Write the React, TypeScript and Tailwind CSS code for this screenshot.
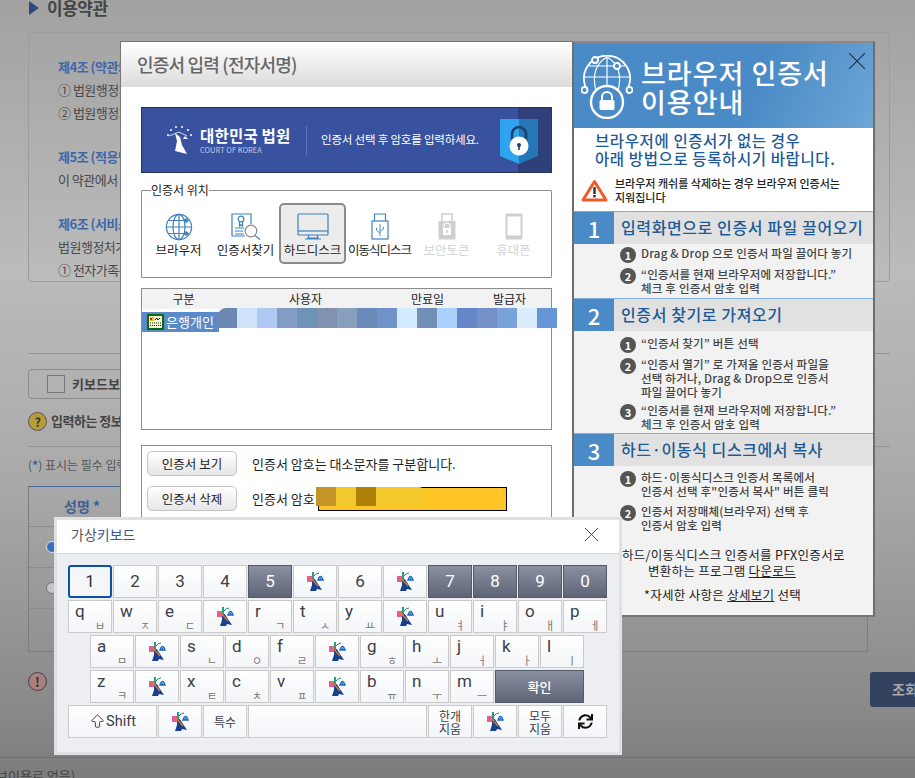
import { ArrowBigUp } from "lucide-react";
import { FaSync } from "react-icons/fa";

/* ================= DATA ================= */

type KeyDef = {
  label?: string;
  sub?: string;
  logo?: boolean;
  dark?: boolean;
  focus?: boolean;
};

const L: KeyDef = { logo: true };

const row1: KeyDef[] = [
  { label: "1", focus: true },
  { label: "2" },
  { label: "3" },
  { label: "4" },
  { label: "5", dark: true },
  L,
  { label: "6" },
  L,
  { label: "7", dark: true },
  { label: "8", dark: true },
  { label: "9", dark: true },
  { label: "0", dark: true },
];

const row2: KeyDef[] = [
  { label: "q", sub: "ㅂ" },
  { label: "w", sub: "ㅈ" },
  { label: "e", sub: "ㄷ" },
  L,
  { label: "r", sub: "ㄱ" },
  { label: "t", sub: "ㅅ" },
  { label: "y", sub: "ㅛ" },
  L,
  { label: "u", sub: "ㅕ" },
  { label: "i", sub: "ㅑ" },
  { label: "o", sub: "ㅐ" },
  { label: "p", sub: "ㅔ" },
];

const row3: KeyDef[] = [
  { label: "a", sub: "ㅁ" },
  L,
  { label: "s", sub: "ㄴ" },
  { label: "d", sub: "ㅇ" },
  { label: "f", sub: "ㄹ" },
  L,
  { label: "g", sub: "ㅎ" },
  { label: "h", sub: "ㅗ" },
  { label: "j", sub: "ㅓ" },
  { label: "k", sub: "ㅏ" },
  { label: "l", sub: "ㅣ" },
];

const row4: KeyDef[] = [
  { label: "z", sub: "ㅋ" },
  L,
  { label: "x", sub: "ㅌ" },
  { label: "c", sub: "ㅊ" },
  { label: "v", sub: "ㅍ" },
  L,
  { label: "b", sub: "ㅠ" },
  { label: "n", sub: "ㅜ" },
  { label: "m", sub: "ㅡ" },
];

const maskColors = [
  "#cfe3fb",
  "#b0c9f2",
  "#829cc4",
  "#6f93b6",
  "#7f92b0",
  "#87a0be",
  "#6a8ab8",
  "#6f93c8",
  "#d3eaff",
  "#7090b8",
  "#abd0fc",
  "#6586c8",
  "#7592c8",
  "#7aa2da",
  "#dcecff",
  "#6496d8",
];

/* ================= ICONS ================= */

function CourtMark() {
  return (
    <svg width="17" height="20" viewBox="0 0 17 20" className="shrink-0">
      <path d="M5 7 Q8 6 9 9 L11 12 L15 18 L10 17 L9 19 L3 19 L5 13 Z" fill="#16418f" />
      <rect x="0" y="4" width="5" height="6" fill="#e8589c" />
      <path d="M6 0 V9" stroke="#12907c" strokeWidth="1.8" />
      <path d="M7 4 Q9 1 12 1" fill="none" stroke="#12907c" strokeWidth="1" />
      <path d="M3 5 L11 14" stroke="#ee7a22" strokeWidth="1.2" />
      <path d="M11 8 Q13.5 1 16 8 Z" fill="none" stroke="#1f66b8" strokeWidth="1.4" />
      <circle cx="13.5" cy="7" r="1" fill="#1f66b8" />
    </svg>
  );
}

function GlobeIcon() {
  return (
    <svg width="28" height="28" viewBox="0 0 28 28" fill="none" stroke="#3f80bd" strokeWidth="1.2">
      <circle cx="14" cy="14" r="12.6" />
      <ellipse cx="14" cy="14" rx="6" ry="12.6" />
      <path d="M14 1.4 V26.6 M1.4 14 H26.6 M3.4 7.5 H24.6 M3.4 20.5 H24.6" />
      <circle cx="21" cy="7.5" r="1.6" fill="#3f80bd" />
      <circle cx="21" cy="20.5" r="1.6" fill="#3f80bd" />
    </svg>
  );
}

function CertSearchIcon() {
  return (
    <svg width="30" height="27" viewBox="0 0 30 27" fill="none" stroke="#3f80bd" strokeWidth="1.2">
      <path d="M20 11 V1 H1 V23 H14" />
      <circle cx="10" cy="6" r="2.8" />
      <path d="M8.5 8.5 V13 L10 11.8 L11.5 13 V8.5" />
      <path d="M4 15 H13 M4 18 H12 M4 21 H13" />
      <circle cx="20" cy="18" r="5.8" stroke="#888" />
      <path d="M24 22.5 L29 26.5" />
    </svg>
  );
}

function MonitorIcon() {
  return (
    <svg width="32" height="27" viewBox="0 0 32 27" fill="none" stroke="#3f80bd" strokeWidth="1.2">
      <rect x="1" y="1" width="30" height="21" rx="1" />
      <path d="M1 18 H31" />
      <path d="M12 22 L11 25 H21 L20 22 M8 26 H24" />
    </svg>
  );
}

function UsbIcon() {
  return (
    <svg width="18" height="27" viewBox="0 0 18 27" fill="none" stroke="#3f80bd" strokeWidth="1.2">
      <path d="M3.5 8 V1 H14.5 V8" />
      <rect x="1" y="8" width="16" height="18" />
      <path d="M9 11 V23 M9 20 L5.5 17.5 V15 M9 18 L12.5 16 V14" strokeWidth="0.9" />
    </svg>
  );
}

function TokenIcon() {
  return (
    <svg width="18" height="27" viewBox="0 0 18 27">
      <path d="M4 8 V1 H14 V8" fill="none" stroke="#cfcfcf" strokeWidth="1.5" />
      <rect x="0.5" y="8" width="17" height="18.5" fill="#cfcfcf" />
      <path d="M6 15 V13 a3 3 0 0 1 6 0 V15" fill="none" stroke="#fff" strokeWidth="1.2" />
      <rect x="5" y="15" width="8" height="7" fill="#fff" />
      <rect x="8.4" y="17" width="1.2" height="3" fill="#bbb" />
    </svg>
  );
}

function PhoneIcon() {
  return (
    <svg width="18" height="27" viewBox="0 0 18 27">
      <rect x="0.5" y="0.5" width="17" height="26" rx="1.5" fill="#cfcfcf" />
      <rect x="2.5" y="3.5" width="13" height="19" fill="#fff" />
    </svg>
  );
}

function CertRowIcon() {
  return (
    <svg width="17" height="16" viewBox="0 0 17 16" className="shrink-0">
      <rect x="0" y="0" width="17" height="16" fill="#0a6a10" />
      <rect x="2" y="2" width="13" height="12" fill="#fbf7d0" />
      <rect x="3" y="3" width="4" height="4" fill="#e8c800" />
      <rect x="3" y="4" width="2" height="2" fill="#d8201a" />
      <path d="M8 6 L10 4 L11 6 L13 4" stroke="#222" strokeWidth="1" fill="none" />
      <path d="M3 9 H14 M3 11.5 H14" stroke="#222" strokeWidth="1" strokeDasharray="1 1" />
    </svg>
  );
}

function GlobeLockIcon() {
  return (
    <svg width="52" height="64" viewBox="0 0 52 64" fill="none" stroke="#fff" strokeWidth="1.8">
      <path d="M5 33 A23 23 0 1 1 47 33" />
      <path d="M26 2 V36 M3 22 H49 M8 11 H44" strokeWidth="1.2" />
      <path d="M26 2 C12 10 12 24 15 36 M26 2 C40 10 40 24 37 36" strokeWidth="1.2" />
      <circle cx="14" cy="5" r="3" fill="#4a8ac6" />
      <circle cx="36" cy="11" r="3" fill="#4a8ac6" />
      <circle cx="3.5" cy="35" r="3" fill="#4a8ac6" />
      <circle cx="48.5" cy="35" r="3" fill="#4a8ac6" />
      <circle cx="26" cy="47" r="16" fill="#4a8ac6" strokeWidth="2.4" />
      <path d="M21 45 V42 a5 5 0 0 1 10 0 V45" strokeWidth="2" />
      <rect x="18.5" y="45" width="15" height="10" rx="1.5" fill="#fff" stroke="none" />
    </svg>
  );
}

function WarningIcon() {
  return (
    <svg width="27" height="23" viewBox="0 0 27 23">
      <path
        d="M13.5 2.5 L25 21 H2 Z"
        fill="#fff"
        stroke="#ef5a2c"
        strokeWidth="3"
        strokeLinejoin="round"
      />
      <rect x="12.3" y="8" width="2.4" height="7" fill="#333" />
      <rect x="12.3" y="16" width="2.4" height="2.4" fill="#333" />
    </svg>
  );
}

function ShieldIcon() {
  return (
    <svg width="40" height="46" viewBox="0 0 40 46">
      <path d="M1 1 H20 V46 L1 38 Z" fill="#2fa4ee" />
      <path d="M20 1 H39 V38 L20 46 Z" fill="#2478b8" />
      <path d="M13 23 V16 a7 7 0 0 1 14 0 V23" fill="none" stroke="#1c3f6e" strokeWidth="2.6" />
      <circle cx="20" cy="28" r="9.5" fill="#fff" />
      <circle cx="20" cy="27" r="2" fill="#1c3f6e" />
      <rect x="19.2" y="27" width="1.6" height="5" fill="#1c3f6e" />
    </svg>
  );
}

function CourtLogoWhite() {
  return (
    <svg width="28" height="30" viewBox="0 0 28 30" fill="#fff">
      <circle cx="3" cy="10" r="1" />
      <circle cx="6" cy="5" r="1" />
      <circle cx="11" cy="2" r="1" />
      <circle cx="17" cy="2" r="1" />
      <circle cx="23" cy="5" r="1" />
      <circle cx="26" cy="10" r="1" />
      <path d="M10 8 L15 12 L17 20 L22 29 L10 26 L12 16 Z" />
      <path d="M4 11 L14 7 M14 7 L22 11" stroke="#fff" strokeWidth="0.8" />
      <path d="M18 14 L20 11 L23 14 Z" />
    </svg>
  );
}

function Close({ size, color }: { size: number; color: string }) {
  return (
    <svg width={size} height={size} viewBox="0 0 16 16" stroke={color} strokeWidth="0.9">
      <path d="M1 1 L15 15 M15 1 L1 15" />
    </svg>
  );
}

/* ================= SMALL PARTS ================= */

function Bullet({ n }: { n: number }) {
  return (
    <span className="w-[16px] h-[16px] mt-px rounded-full bg-[#555] text-white text-[11px] font-bold leading-[16px] text-center shrink-0">
      {n}
    </span>
  );
}

function Item({ n, lines }: { n: number; lines: string[] }) {
  return (
    <div className="flex gap-[5px] text-[11.5px] leading-[14px] font-medium text-[#444] tracking-[0.2px]">
      <Bullet n={n} />
      <div>
        {lines.map((line) => (
          <p key={line} className="whitespace-nowrap">
            {line}
          </p>
        ))}
      </div>
    </div>
  );
}

function GuideHead({ n, title }: { n: number; title: string }) {
  return (
    <div className="flex h-[33px] border-t border-[#7fb0dc]">
      <div className="w-[40px] bg-[#4a8ac6] text-white text-[22px] font-medium flex items-center justify-center">
        {n}
      </div>
      <div className="flex-1 bg-[#e1e1e1] pl-[7px] pb-[3px] flex items-center text-[16px] font-medium text-[#1d5a96] tracking-[0.6px] whitespace-nowrap">
        {title}
      </div>
    </div>
  );
}

function Key({ k }: { k: KeyDef }) {
  if (k.dark) {
    return (
      <div className="w-[44px] h-[33px] border border-[#555a68] bg-gradient-to-b from-[#8a90a1] to-[#5f6476] text-white text-[17px] flex items-center justify-center">
        {k.label}
      </div>
    );
  }

  if (k.focus) {
    return (
      <div className="w-[44px] h-[33px] border-2 border-[#0b4fb0] rounded-[3px] bg-[#f5f6f8] text-[#333] text-[17px] flex items-center justify-center">
        {k.label}
      </div>
    );
  }

  return (
    <div
      className={`relative w-[44px] h-[33px] border border-[#cacaca] bg-gradient-to-b from-white to-[#f3f5f8] text-[#3b3f47] flex ${
        k.sub ? "pl-[6px] text-[17px] leading-[20px]" : "items-center justify-center text-[17px]"
      }`}
    >
      {k.logo ? <CourtMark /> : k.label}
      {k.sub && (
        <span className="absolute right-[6px] bottom-[1px] text-[11px] leading-[11px] text-[#777] font-['Noto_Sans_CJK_KR']">
          {k.sub}
        </span>
      )}
    </div>
  );
}

function PlainKey({ children, wide }: { children: React.ReactNode; wide?: string }) {
  return (
    <div
      className={`${
        wide || "w-[44px]"
      } h-[33px] border border-[#cacaca] bg-gradient-to-b from-white to-[#f3f5f8] text-[#3b3f47] flex items-center justify-center text-center`}
    >
      {children}
    </div>
  );
}

function PlaceButton({
  icon,
  label,
  active,
  off,
  tight,
}: {
  icon: React.ReactNode;
  label: string;
  active?: boolean;
  off?: boolean;
  tight?: boolean;
}) {
  return (
    <div
      className={`w-[67px] h-[61px] rounded-[5px] flex flex-col items-center pt-[8px] ${
        active ? "border-2 border-[#8b8b8b] bg-[#ececec]" : "border-2 border-transparent"
      }`}
    >
      <div className="h-[27px] flex items-center">{icon}</div>
      <span
        className={`mt-[1px] text-[12.5px] leading-[18px] whitespace-nowrap ${
          tight ? "tracking-[-1px]" : ""
        } ${off ? "text-[#d2d2d2]" : "text-[#222]"}`}
      >
        {label}
      </span>
    </div>
  );
}

/* ================= PAGE ================= */

export default function App() {
  return (
    <div className="relative w-[915px] h-[778px] overflow-hidden font-['Noto_Sans_CJK_KR','Noto_Sans',sans-serif] bg-[linear-gradient(180deg,#a2a2a2_0%,#bbbbbb_35%,#a9a9a9_62%,#888888_92%,#7c7c7c_100%)]">
      {/* BACKGROUND PAGE */}
      <div className="pl-[28px]">
        <div className="flex items-center gap-[8px] h-[16px] text-[17px] font-bold text-[#444] tracking-[-0.5px]">
          <span className="w-0 h-0 ml-px border-y-[7px] border-y-transparent border-l-[10px] border-l-[#2f4a7e]" />
          이용약관
        </div>

        <div className="mt-[16px] w-[862px] h-[250px] border border-[#9c9c9c] rounded-[4px] pl-[29px] pt-[22px] text-[13px] leading-[23px] text-[#4a4a4a] tracking-[-0.5px]">
          <p className="font-bold text-[#3f67a8]">제4조 (약관의 효력)</p>
          <p>① 법원행정처장은</p>
          <p>② 법원행정처장은</p>
          <p className="mt-[21px] font-bold text-[#3f67a8]">제5조 (적용범위)</p>
          <p>이 약관에서</p>
          <p className="mt-[21px] font-bold text-[#3f67a8]">제6조 (서비스)</p>
          <p>법원행정처가</p>
          <p>① 전자가족관계</p>
        </div>

        <div className="mt-[71px] w-[862px] border-t border-[#949494]" />

        <div className="mt-[15px] w-[300px] h-[30px] border border-[#8c8c8c] rounded-[4px] pl-[18px] flex items-center gap-[7px] text-[13px] font-bold text-[#444]">
          <span className="w-[18px] h-[18px] border border-[#777] bg-[#b4b4b4]" />
          키보드보안
        </div>

        <div className="mt-[12px] flex items-center gap-[4px] h-[20px] text-[13px] font-bold text-[#444] tracking-[-0.5px]">
          <span className="w-[19px] h-[19px] rounded-full bg-[#b89c38] border border-[#555] text-[12px] leading-[17px] text-center text-[#333]">
            ?
          </span>
          입력하는 정보
        </div>

        <div className="mt-[15px] w-[862px] border-t border-[#949494]" />

        <p className="mt-[8px] text-[12px] leading-[20px] text-[#555]">
          (<span className="text-[#3f5f95] font-bold">*</span>) 표시는 필수 입력
        </p>

        <div className="mt-[11px] w-[840px] h-[166px] border border-[#7d7d7d] border-t-[#4a6a96] flex flex-col">
          <div className="h-[40px] border-b border-[#8c8c8c] pl-[35px] flex items-center text-[14px] font-bold text-[#3f5f95]">
            성명 *
          </div>
          <div className="h-[41px] border-b border-[#8c8c8c] pl-[17px] flex items-center">
            <span className="w-[12px] h-[12px] rounded-full bg-[#3a6fc0] border border-[#ddd]" />
          </div>
          <div className="h-[41px] border-b border-[#8c8c8c] pl-[17px] flex items-center">
            <span className="w-[12px] h-[12px] rounded-full bg-[#c4c4c4] border border-[#777]" />
          </div>
        </div>

        <div className="mt-[20px] flex justify-between h-[35px]">
          <span className="w-[19px] h-[19px] rounded-full bg-[#a88080] border border-[#444] text-[13px] leading-[17px] font-bold text-center text-[#333]">
            !
          </span>
          <div className="w-[45px] rounded-l-[3px] bg-[#33435f] text-[14px] font-bold text-[#a9a9a9] pl-[22px] flex items-center whitespace-nowrap overflow-hidden">
            조회
          </div>
        </div>

        <div className="mt-[50px] -ml-[28px] w-[915px] border-t border-[#6f6f6f]" />
        <p className="mt-[10px] -ml-[32px] text-[13px] leading-[16px] text-[#444] whitespace-nowrap">
          보이용로 없음)
        </p>
      </div>

      {/* CERTIFICATE DIALOG */}
      <div className="absolute left-[120px] top-[41px] w-[452px] h-[640px] bg-white border border-[#777] border-r-0">
        <div className="h-[45px] bg-gradient-to-b from-white to-[#dcdcdc] pl-[16px] flex items-center text-[18px] font-medium text-[#666] tracking-[-0.8px]">
          인증서 입력 (전자서명)
        </div>

        <div className="px-[20px]">
          {/* BANNER */}
          <div className="mt-[20px] h-[66px] border border-[#26345f] bg-[#38529f] flex items-center text-white">
            <div className="ml-[23px]">
              <CourtLogoWhite />
            </div>
            <div className="ml-[7px] w-[91px]">
              <p className="text-[15.5px] leading-[19px] font-bold tracking-[0.2px] whitespace-nowrap">
                대한민국 법원
              </p>
              <p className="text-[7.5px] leading-[10px] text-[#c3cee8]">COURT OF KOREA</p>
            </div>
            <div className="ml-[15px] w-px h-[29px] bg-[#5f76b6]" />
            <p className="ml-[14px] text-[11.5px] tracking-[-0.2px] whitespace-nowrap">
              인증서 선택 후 암호를 입력하세요.
            </p>
            <div className="relative ml-auto w-[33px] h-full bg-[#2e3f7a]">
              <div className="absolute right-[12px] top-[10px]">
                <ShieldIcon />
              </div>
            </div>
          </div>

          {/* PLACE */}
          <fieldset className="mt-[10px] h-[95px] border border-[#8c8c8c] rounded-[1px] pl-[4px]">
            <legend className="ml-[5px] text-[12px] leading-[14px] text-[#222]">인증서 위치</legend>
            <div className="flex mt-[6px] -ml-[1px]">
              <PlaceButton icon={<GlobeIcon />} label="브라우저" />
              <PlaceButton icon={<CertSearchIcon />} label="인증서찾기" />
              <PlaceButton icon={<MonitorIcon />} label="하드디스크" active />
              <PlaceButton icon={<UsbIcon />} label="이동식디스크" tight />
              <PlaceButton icon={<TokenIcon />} label="보안토큰" off />
              <PlaceButton icon={<PhoneIcon />} label="휴대폰" off />
            </div>
          </fieldset>

          {/* TABLE */}
          <div className="mt-[10px] h-[142px] border border-[#8c8c8c] text-[12px]">
            <div className="flex h-[20px] bg-[#f2f2f2] items-center text-center text-[#222]">
              <span className="w-[83px]">구분</span>
              <span className="w-[161px]">사용자</span>
              <span className="w-[83px]">만료일</span>
              <span className="w-[81px]">발급자</span>
            </div>
            <div className="relative mt-[3px] h-[20px] flex items-center gap-[2px] w-[77px] bg-[#5a8ac8] text-white pl-[5px]">
              <CertRowIcon />
              <span className="whitespace-nowrap text-[13px]">은행개인</span>
              <div className="absolute left-[76px] -top-[4px] flex h-[20px]">
                <span className="w-[19px] rounded-tl-[8px] bg-[#6b88b4]" />
                {maskColors.map((color) => (
                  <span key={color} className="w-[20px]" style={{ backgroundColor: color }} />
                ))}
              </div>
            </div>
          </div>

          {/* PASSWORD */}
          <div className="mt-[15px] h-[100px] border border-[#8c8c8c] px-[5px] pt-[5px] text-[13px] text-[#222]">
            <div className="flex items-center gap-[15px] h-[25px]">
              <div className="w-[90px] h-[25px] rounded-[5px] border border-[#c4c4c4] bg-gradient-to-b from-white to-[#e6e6e6] text-center text-[12.5px] leading-[23px]">
                인증서 보기
              </div>
              <span>인증서 암호는 대소문자를 구분합니다.</span>
            </div>
            <div className="mt-[10px] flex items-center gap-[15px] h-[25px]">
              <div className="w-[90px] h-[25px] rounded-[5px] border border-[#c4c4c4] bg-gradient-to-b from-white to-[#e6e6e6] text-center text-[12.5px] leading-[23px]">
                인증서 삭제
              </div>
              <span className="whitespace-nowrap">인증서 암호</span>
              <div className="relative -ml-[12px] w-[189px] h-[24px] border border-black bg-[#ffc527]">
                <div className="absolute -left-[3px] -top-[1px] flex h-[19px] w-[107px] bg-[#f3c92b] rounded-tr-[4px]">
                  <span className="w-[20px] bg-[#c49528]" />
                  <span className="w-[20px] bg-[#f0ca2c]" />
                  <span className="w-[20px] bg-[#ae8008]" />
                </div>
              </div>
            </div>
          </div>
        </div>
      </div>

      {/* GUIDE PANEL */}
      <div className="absolute left-[572px] top-[41px] w-[303px] h-[576px] bg-[#f2f2f2] border-2 border-[#6e6e6e] border-t-[#8a8a8a] border-b-[#777]">
        <div className="relative h-[85px] pt-[3px] flex items-center gap-[7px] pl-[7px] bg-[linear-gradient(115deg,#4a8ac6_0%,#4a8ac6_60%,#6ea6d6_100%)] text-white">
          <GlobeLockIcon />
          <div className="pl-[1px] text-[27px] leading-[29px] font-medium tracking-[1px] whitespace-nowrap">
            <p>브라우저 인증서</p>
            <p>이용안내</p>
          </div>
          <div className="absolute right-[7px] top-[9px]">
            <Close size={18} color="#1b2a3c" />
          </div>
        </div>

        <div className="h-[83px] bg-white pl-[7px]">
          <div className="pl-[14px] pt-[3px] text-[15.5px] leading-[18px] font-medium text-[#1d5a96] tracking-[0.6px] whitespace-nowrap">
            <p>브라우저에 인증서가 없는 경우</p>
            <p>아래 방법으로 등록하시기 바랍니다.</p>
          </div>
          <div className="mt-[9px] flex items-center gap-[7px] text-[11px] leading-[14px] font-medium text-[#222]">
            <WarningIcon />
            <div className="whitespace-nowrap">
              <p>브라우저 캐쉬를 삭제하는 경우 브라우저 인증서는</p>
              <p>지워집니다</p>
            </div>
          </div>
        </div>

        <GuideHead n={1} title="입력화면으로 인증서 파일 끌어오기" />
        <div className="h-[54px] pl-[46px] pt-[2px] flex flex-col gap-[4px]">
          <Item n={1} lines={["Drag & Drop 으로 인증서 파일 끌어다 놓기"]} />
          <Item n={2} lines={["“인증서를 현재 브라우저에 저장합니다.”", "체크 후 인증서 암호 입력"]} />
        </div>

        <GuideHead n={2} title="인증서 찾기로 가져오기" />
        <div className="h-[102px] pl-[46px] pt-[5px] flex flex-col gap-[4px]">
          <Item n={1} lines={["“인증서 찾기” 버튼 선택"]} />
          <Item
            n={2}
            lines={["“인증서 열기” 로 가져올 인증서 파일을", "선택 하거나, Drag & Drop으로 인증서", "파일 끌어다 놓기"]}
          />
          <Item n={3} lines={["“인증서를 현재 브라우저에 저장합니다.”", "체크 후 인증서 암호 입력"]} />
        </div>

        <GuideHead n={3} title="하드·이동식 디스크에서 복사" />
        <div className="pl-[46px] pt-[4px] flex flex-col gap-[6px]">
          <Item n={1} lines={["하드·이동식디스크 인증서 목록에서", "인증서 선택 후\"인증서 복사\" 버튼 클릭"]} />
          <Item n={2} lines={["인증서 저장매체(브라우저) 선택 후", "인증서 암호 입력"]} />
        </div>

        <div className="mt-[15px] pl-[48px] text-[12.5px] leading-[16px] text-[#222] whitespace-nowrap tracking-[0.3px]">
          <p>하드/이동식디스크 인증서를 PFX인증서로</p>
          <p className="pl-[26px]">
            변환하는 프로그램 <span className="underline">다운로드</span>
          </p>
          <p className="mt-[8px] pl-[22px]">
            *자세한 사항은 <span className="underline">상세보기</span> 선택
          </p>
        </div>
      </div>

      {/* VIRTUAL KEYBOARD */}
      <div className="absolute left-[54px] top-[517px] w-[568px] h-[238px] bg-[#eceef1] border-[3px] border-[#dfe1e5] font-['Roboto','Noto_Sans_CJK_KR',sans-serif]">
        <div className="h-[34px] bg-white border-b border-[#d5d7db] pl-[14px] pr-[20px] pb-[4px] flex items-center justify-between text-[14px] text-[#555] font-['Noto_Sans_CJK_KR',sans-serif]">
          <span>
            가상<span className="text-[#3a5a95]">키보드</span>
          </span>
          <Close size={15} color="#333" />
        </div>

        <div className="pl-[11px] pt-[11px] flex flex-col gap-[2px]">
          <div className="flex gap-px">
            {row1.map((k, i) => (
              <Key key={i} k={k} />
            ))}
          </div>
          <div className="flex gap-px">
            {row2.map((k, i) => (
              <Key key={i} k={k} />
            ))}
          </div>
          <div className="flex gap-px pl-[22px]">
            {row3.map((k, i) => (
              <Key key={i} k={k} />
            ))}
          </div>
          <div className="flex gap-px pl-[22px]">
            {row4.map((k, i) => (
              <Key key={i} k={k} />
            ))}
            <div className="w-[89px] h-[33px] border border-[#555a68] bg-gradient-to-b from-[#8a90a1] to-[#5f6476] text-white text-[13px] font-medium flex items-center justify-center font-['Noto_Sans_CJK_KR',sans-serif]">
              확인
            </div>
          </div>
          <div className="flex gap-px">
            <PlainKey wide="w-[89px]">
              <span className="flex items-center text-[14.5px]">
                <ArrowBigUp size={17} strokeWidth={1.4} />
                Shift
              </span>
            </PlainKey>
            <PlainKey>
              <CourtMark />
            </PlainKey>
            <PlainKey>
              <span className="text-[12px] font-['Noto_Sans_CJK_KR',sans-serif]">특수</span>
            </PlainKey>
            <PlainKey wide="w-[179px]">{""}</PlainKey>
            <PlainKey>
              <span className="text-[12px] leading-[13px] font-['Noto_Sans_CJK_KR',sans-serif]">
                한개
                <br />
                지움
              </span>
            </PlainKey>
            <PlainKey>
              <CourtMark />
            </PlainKey>
            <PlainKey>
              <span className="text-[12px] leading-[13px] font-['Noto_Sans_CJK_KR',sans-serif]">
                모두
                <br />
                지움
              </span>
            </PlainKey>
            <PlainKey>
              <FaSync size={15} color="#111" />
            </PlainKey>
          </div>
        </div>
      </div>
    </div>
  );
}
